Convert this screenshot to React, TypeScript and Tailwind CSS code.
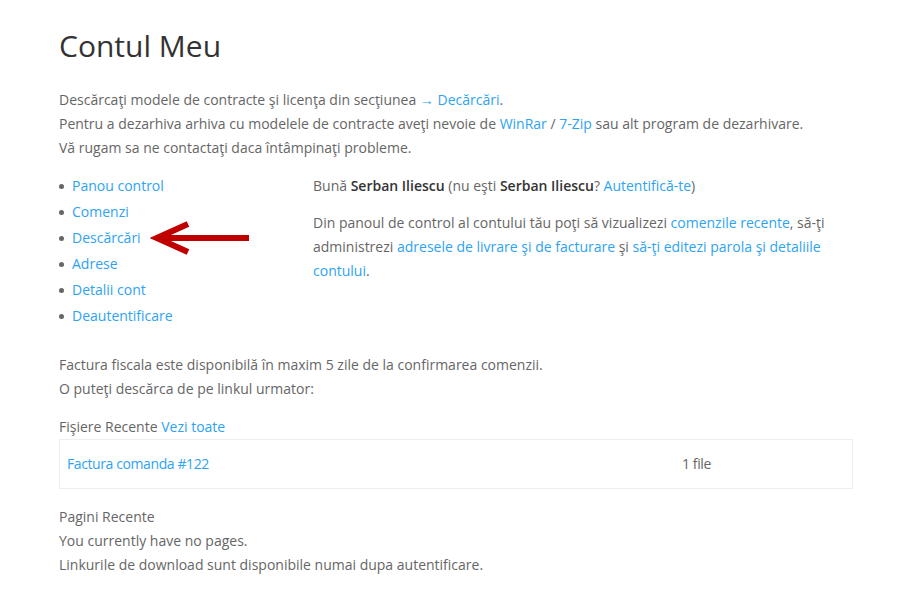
import React from "react";

const link = "text-[#2ea3f2]";

function Arrow() {
  return (
    <svg
      className="absolute left-[78px] top-[-5px]"
      width="104"
      height="36"
      viewBox="0 0 104 36"
      fill="none"
    >
      <path d="M8 18 H99" stroke="#c00000" strokeWidth="6" />
      <path d="M38 4 L7 18 L38 32" stroke="#c00000" strokeWidth="6" strokeLinejoin="miter" />
    </svg>
  );
}

export default function App() {
  const menu = ["Panou control", "Comenzi", "Descărcări", "Adrese", "Detalii cont", "Deautentificare"];

  return (
    <div className="min-h-[596px] bg-white font-['Open_Sans',sans-serif] text-[14px] leading-[24px] text-[#666]">
      <div className="w-[794px] ml-[59px] pt-[26px]">
        <h1 className="text-[30px] leading-[40px] text-[#333] font-normal">Contul Meu</h1>

        <div className="mt-[22px]">
          <p>
            Descărcaţi modele de contracte şi licenţa din secţiunea <span className={link}>→ Decărcări</span>.
          </p>
          <p>
            Pentru a dezarhiva arhiva cu modelele de contracte aveţi nevoie de <span className={link}>WinRar</span> /{" "}
            <span className={link}>7-Zip</span> sau alt program de dezarhivare.
          </p>
          <p>Vă rugam sa ne contactaţi daca întâmpinaţi probleme.</p>
        </div>

        <div className="flex mt-[13px]">
          <ul className="w-[254px] shrink-0">
            {menu.map((m) => (
              <li key={m} className="flex items-center leading-[26px]">
                <span className="w-[5px] h-[5px] rounded-full bg-[#666] mr-[8px]" />
                <span className="relative">
                  <span className={link}>{m}</span>
                  {m === "Descărcări" && <Arrow />}
                </span>
              </li>
            ))}
          </ul>
          <div className="flex-1 pt-[1px]">
            <p>
              Bună <b className="text-[#333] font-semibold">Serban Iliescu</b> (nu eşti{" "}
              <b className="text-[#333] font-semibold">Serban Iliescu</b>? <span className={link}>Autentifică-te</span>)
            </p>
            <p className="mt-[13px] pr-[20px]">
              Din panoul de control al contului tău poţi să vizualizezi{" "}
              <span className={link}>comenzile recente</span>, să-ţi administrezi{" "}
              <span className={link}>adresele de livrare şi de facturare</span> şi{" "}
              <span className={link}>să-ţi editezi parola şi detaliile contului</span>.
            </p>
          </div>
        </div>

        <div className="mt-[24px]">
          <p>Factura fiscala este disponibilă în maxim 5 zile de la confirmarea comenzii.</p>
          <p>O puteţi descărca de pe linkul urmator:</p>
        </div>

        <p className="mt-[14px]">
          Fişiere Recente <span className={link}>Vezi toate</span>
        </p>
        <div className="border border-[#eee] flex items-center h-[50px] px-[7px]">
          <span className={`${link} w-[615px] tracking-[-0.4px]`}>Factura comanda #122</span>
          <span className="tracking-[-0.4px]">1 file</span>
        </div>

        <div className="mt-[16px]">
          <p>Pagini Recente</p>
          <p>You currently have no pages.</p>
          <p>Linkurile de download sunt disponibile numai dupa autentificare.</p>
        </div>
      </div>
    </div>
  );
}
